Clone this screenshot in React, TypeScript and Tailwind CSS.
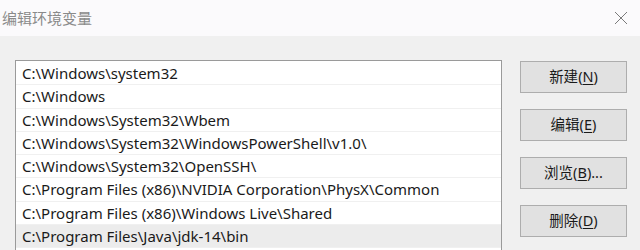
import React from "react";

const rows = [
  "C:\\Windows\\system32",
  "C:\\Windows",
  "C:\\Windows\\System32\\Wbem",
  "C:\\Windows\\System32\\WindowsPowerShell\\v1.0\\",
  "C:\\Windows\\System32\\OpenSSH\\",
  "C:\\Program Files (x86)\\NVIDIA Corporation\\PhysX\\Common",
  "C:\\Program Files (x86)\\Windows Live\\Shared",
  "C:\\Program Files\\Java\\jdk-14\\bin",
];

function Btn({ label, k, tail = "" }: { label: string; k: string; tail?: string }) {
  return (
    <button className="w-[107px] h-[32px] bg-[#e1e1e1] border border-[#adadad] text-[14.5px] text-[#1a1a1a] flex items-center justify-center">
      {label}(<span className="underline underline-offset-2">{k}</span>){tail}
    </button>
  );
}

export default function App() {
  return (
    <div
      className="w-[640px] h-[250px] overflow-hidden bg-[#f0f0f0] flex flex-col"
      style={{ fontFamily: '"Noto Sans", "Noto Sans CJK SC", sans-serif' }}
    >
      <div className="h-[36px] shrink-0 bg-[#fbfafc] flex items-center justify-between pl-[2px] pr-[10px]">
        <span className="text-[15px] text-[#8a8a8a]">编辑环境变量</span>
        <svg width="14" height="14" viewBox="0 0 14 14" className="mr-[2px]">
          <path d="M1 1 L13 13 M13 1 L1 13" stroke="#7a7a7a" strokeWidth="1" fill="none" />
        </svg>
      </div>
      <div className="flex pt-[24px] pl-[15px]">
        <div className="w-[487px] h-[200px] bg-white border border-[#9a9a9a] pt-[1px] flex flex-col shrink-0">
          {rows.map((r, i) => (
            <div
              key={i}
              className={
                "h-[23.3px] shrink-0 flex items-center pl-[6px] text-[15px] text-[#1a1a1a] whitespace-nowrap border-b border-[#f0f0f0] " +
                (i === rows.length - 1 ? "bg-[#ececec]" : "")
              }
            >
              {r}
            </div>
          ))}
        </div>
        <div className="ml-[18px] pt-[1px] flex flex-col gap-[16px]">
          <Btn label="新建" k="N" />
          <Btn label="编辑" k="E" />
          <Btn label="浏览" k="B" tail="..." />
          <Btn label="删除" k="D" />
        </div>
      </div>
    </div>
  );
}
